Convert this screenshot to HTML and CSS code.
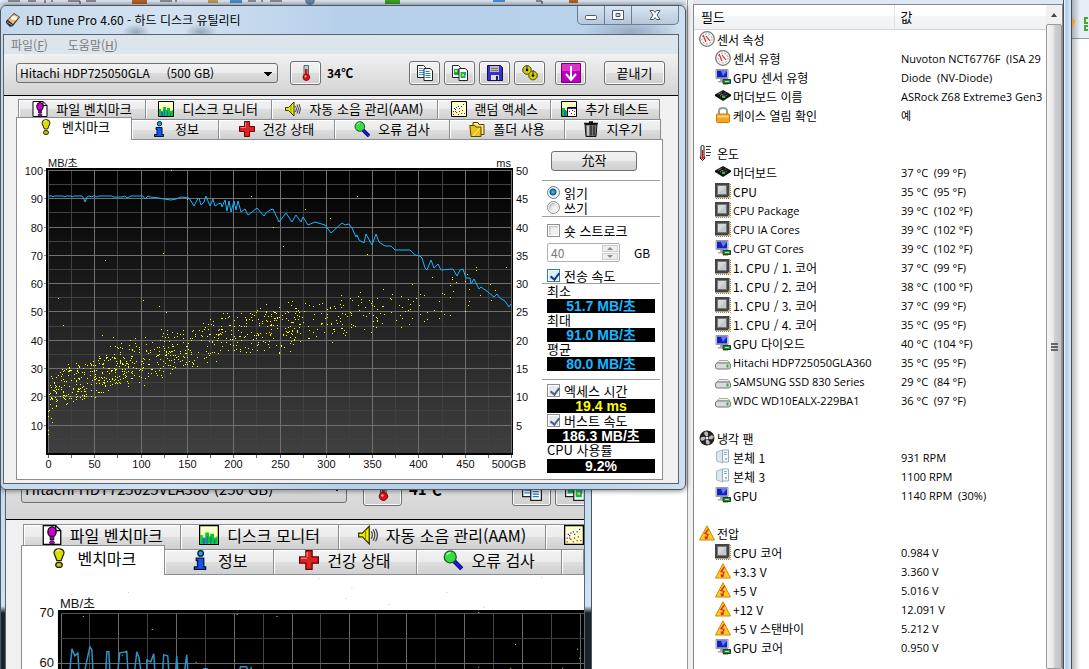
FILE: index.html
```html
<!DOCTYPE html>
<html lang="ko">
<head>
<meta charset="utf-8">
<title>HD Tune Pro 4.60 - 하드 디스크 유틸리티</title>
<link rel="stylesheet" href="styles.css">
</head>
<body>
<svg class="sprite" aria-hidden="true">
  <symbol id="i-disk" viewBox="0 0 16 16"><path d="M1 9 9 1l6 4-7 9-3 1-4-4z" fill="#333"/><path d="M3 8 9 2l5 3-6 7z" fill="#e9b878"/><ellipse cx="9" cy="6" rx="3" ry="2" fill="#fff3dc"/><path d="m2 10 5 3" stroke="#999"/></symbol>
  <symbol id="i-filebench" viewBox="0 0 16 16"><path d="M1 .5h10l4 4v11H1z" fill="#fff" stroke="#000"/><path d="M11 .5v4h4" fill="none" stroke="#000"/><ellipse cx="8" cy="5.500" rx="3.300" ry="4" fill="#c0c" stroke="#000"/><path d="M6.500 9h3v3h-3z" fill="#909" stroke="#000" stroke-width=".6"/><ellipse cx="8" cy="14" rx="2" ry="1.300" fill="#c0c" stroke="#000" stroke-width=".6"/></symbol>
  <symbol id="i-monitor" viewBox="0 0 16 16"><path d="M.5.5h15v15H.5z" fill="#ffffc8" stroke="#000"/><path d="M1 15V8h2v2h2V6h3v3h1V7h3v3h2v-1h1v6z" fill="#0c2"/><path d="M3 15v-4h2v4zM6 15V9h1v6zM9 15v-5h1v5zM12 15v-3h1v3z" fill="#35e"/></symbol>
  <symbol id="i-sound" viewBox="0 0 16 16"><path d="M.5 6.500h3L9 1v14L3.500 9.500h-3z" fill="#ee0" stroke="#330"/><path d="M6 4v8" stroke="#880"/><path d="M10.500 5q2 3 0 6M12 3.500q3 4.500 0 9M14 3q3 5 0 10" fill="none" stroke="#444"/></symbol>
  <symbol id="i-random" viewBox="0 0 16 16"><path d="M.5.5h15v15H.5z" fill="#ffffc8" stroke="#000"/><path d="M2 10h1v1H2zM4 8h1v1H4zM5 6h1v1H5zM7 5h1v1H7zM10 5h1v1h-1zM12 3h1v1h-1zM3 7h1v1H3zM8 7h1v1H8z" fill="#22f"/><path d="M2 13h1v1H2zM5 11h1v1H5zM8 10h1v1H8zM7 13h1v1H7zM11 9h1v1h-1zM13 12h1v1h-1zM10 12h1v1h-1zM4 10h1v1H4z" fill="#e00"/></symbol>
  <symbol id="i-extra" viewBox="0 0 16 16"><path d="M.5.5h15v15H.5z" fill="#ffffc8" stroke="#000"/><path d="M1 7h3v3h2v5H1z" fill="#0c2"/><path d="M3 9h2v6H3z" fill="#35e"/><path d="M6.500 6.500h9v9h-9z" fill="#fff" stroke="#000"/><path d="M7 7h8v1H7z" fill="#22c"/><path d="M8 10h1v1H8zM11 9h1v1h-1zM13 10h1v1h-1zM10 12h1v1h-1zM13 13h1v1h-1z" fill="#e00"/></symbol>
  <symbol id="i-bulb" viewBox="0 0 16 16"><path d="M8 .6q4 0 4 3.500L9.700 10H6.300L4 4.100Q4 .6 8 .6z" fill="#dd0" stroke="#220"/><path d="M6 2.500q1-1 2.500-1" stroke="#ffa" fill="none"/><ellipse cx="8" cy="13.500" rx="2.600" ry="2" fill="#cc0" stroke="#220"/></symbol>
  <symbol id="i-info" viewBox="0 0 16 16"><circle cx="8.500" cy="2.700" r="2.200" fill="#1ae" stroke="#013"/><path d="M5 6.500h6v7h1.500v2h-9v-2H6V8.500H5z" fill="#15e" stroke="#013"/></symbol>
  <symbol id="i-cross" viewBox="0 0 16 16"><path d="M5.500.5h5v5h5v5h-5v5h-5v-5h-5v-5h5z" fill="#d22" stroke="#600"/><path d="M6.500 6.500h-5M6.500 1.500v4" stroke="#f88"/></symbol>
  <symbol id="i-lens" viewBox="0 0 16 16"><path d="m9 9 6 6" stroke="#006" stroke-width="3.500"/><path d="m9 9 6 6" stroke="#22e" stroke-width="1.500"/><circle cx="5.800" cy="5.500" r="4.800" fill="#3d4" stroke="#252"/><path d="M3 4q1-2 3-2" stroke="#cfc" fill="none"/></symbol>
  <symbol id="i-folder" viewBox="0 0 16 16"><path d="M4 1.500h5l1 2h5v10H4z" fill="#ffe680" stroke="#540"/><path d="M.8 4.500h5l1 1.500H12v9.500H2z" fill="#ecc21a" stroke="#540"/><path d="m4 15 7-8" stroke="#fff08a"/></symbol>
  <symbol id="i-trash" viewBox="0 0 16 16"><path d="M2 3.500h12l-1 12H3z" fill="#777" stroke="#111"/><path d="M1 2.500h14M6 1h4" stroke="#111" stroke-width="1.600"/><path d="M5 4.500v10" stroke="#eee" stroke-width="1.300"/><path d="M8 4.500v10M11 4.500v10" stroke="#222" stroke-width="1.300"/></symbol>
  <symbol id="i-thermo" viewBox="0 0 16 16"><path d="M6 .5h4.500v9l1.500 3-3.500 3-3.500-3L6 9.500z" fill="#9bd8e8" stroke="#444" stroke-width=".8"/><path d="M7 4h2.500v7H7z" fill="#e11"/><circle cx="8.300" cy="12.300" r="3.300" fill="#d11" stroke="#600" stroke-width=".6"/><circle cx="7.500" cy="11.500" r="1" fill="#fbb"/></symbol>
  <symbol id="i-copy" viewBox="0 0 16 16"><path d="M.5.5h6l2 2v10h-8z" fill="#fff" stroke="#222"/><path d="M2 3.500h4M2 5.500h5M2 7.500h5M2 9.500h5" stroke="#39e"/><path d="M7 3.500h6l2.500 2v10H7z" fill="#fff" stroke="#222"/><path d="M8.500 6.500h4M8.500 8.500h5M8.500 10.500h5M8.500 12.500h5" stroke="#27c"/></symbol>
  <symbol id="i-copyimg" viewBox="0 0 16 16"><path d="M.5.5h6l2 2v10h-8z" fill="#fff" stroke="#222"/><path d="M2 4h5v6H2z" fill="#1a5"/><path d="M7 3.500h6l2.500 2v10H7z" fill="#fff" stroke="#222"/><path d="M8.500 7h5v6h-5z" fill="#1b5"/><path d="M3 5h2v2H3zM10 9h2v2h-2z" fill="#ed2"/><path d="M12 7h2v3h-2z" fill="#28c"/></symbol>
  <symbol id="i-save" viewBox="0 0 16 16"><path d="M.5.5h13l2 2v13H.5z" fill="#33c" stroke="#114"/><path d="M3 1h9v6H3z" fill="#bbb"/><path d="M4 3.500h7M4 5.500h7" stroke="#777"/><path d="M4 10h8v5H4z" fill="#ddd"/><path d="M9 11h2v4H9z" fill="#224"/></symbol>
  <symbol id="i-gears" viewBox="0 0 16 16"><g fill="#cc1" stroke="#330"><circle cx="5" cy="5" r="4.300"/><circle cx="11" cy="10.500" r="4.300"/></g><g fill="none" stroke="#aa1" stroke-dasharray="1 1"><circle cx="5" cy="5" r="4.300"/><circle cx="11" cy="10.500" r="4.300"/></g><circle cx="5" cy="5" r="1.300"/><circle cx="11" cy="10.500" r="1.300"/><path d="M5 0v4M11 5v5" stroke="#555" stroke-width="1.300"/></symbol>
  <symbol id="i-down" viewBox="0 0 20 20"><path d="M.5.5h19v19H.5z" fill="#b0b" stroke="#707"/><path d="M1 1h18v7H1z" fill="#d3c"/><path d="M10 3v12M5 11l5 6 5-6" fill="none" stroke="#fff" stroke-width="2"/></symbol>
  <symbol id="i-gauge" viewBox="0 0 16 16"><circle cx="8" cy="8" r="7.300" fill="#fafafa" stroke="#777" stroke-width="1.300"/><circle cx="8" cy="8" r="5" fill="none" stroke="#888" stroke-dasharray="1.500 2"/><path d="m4 4 3 7M7 5l4 5" stroke="#d22" stroke-width="1.200"/></symbol>
  <symbol id="i-gpu" viewBox="0 0 16 16"><path d="M1 .5h12v9H1z" fill="#ddd" stroke="#999"/><path d="M2 1.500h10v7H2z" fill="#12b"/><path d="M6 2h6L8 7z" fill="#67f"/><path d="M5 10h4v2h2v1.500H3V12h2z" fill="#aaa"/><path d="M8 10.500h7.500v4H8z" fill="#285" stroke="#143"/><path d="M10 12h4v1h-4z" fill="#bda"/><path d="M8 15h5v1H8z" fill="#da3"/></symbol>
  <symbol id="i-board" viewBox="0 0 16 16"><path d="m8 2 8 4.500v1.500L8 13 0 8V6.500z" fill="#111"/><path d="m3 6.500 5-3M5 8l6-3M8 9.500l5-3M4 5l7 4" stroke="#999" stroke-dasharray="1 1"/><path d="M7 8h3v2H7z" fill="#1c3"/></symbol>
  <symbol id="i-lock" viewBox="0 0 16 16"><path d="M4 8V4q0-3 4-3t4 3v4" fill="none" stroke="#999" stroke-width="2"/><rect x="1.500" y="7" width="13" height="8.500" rx="1" fill="#f7a41c" stroke="#c97a10"/><path d="M2.500 8.500h11v2h-11z" fill="#ffd877"/></symbol>
  <symbol id="i-temp" viewBox="0 0 16 16"><path d="M2 1.500q0-1 1.500-1T5 1.500V11l1 2-2.500 2.500L1 13l1-2z" fill="#fff" stroke="#111"/><path d="M3 5h1.200v6l1 2-1.700 1.500L2 13l1-2z" fill="#d11"/><path d="M7 1.500h5M7 4.500h4M7 7.500h5M7 10.500h4" stroke="#333"/></symbol>
  <symbol id="i-chip" viewBox="0 0 16 16"><path d="M1 15.500h14.500V1" fill="none" stroke="#a87c20" stroke-dasharray="1 1"/><path d="M0 0h14.500v14.500H0z" fill="#444"/><path d="M2.500 2.500h9v9h-9z" fill="#c4c8c8" stroke="#777"/><path d="M3 3h8L3 11z" fill="#dde0e0" opacity=".7"/><path d="M13 13h1.500v1.500H13z" fill="#e9a820"/></symbol>
  <symbol id="i-drive" viewBox="0 0 16 16"><path d="m2 9 2-2.500h9L15 9z" fill="#f2f2f2" stroke="#aaa"/><rect x=".5" y="9" width="15" height="6" rx="2" fill="#d8dadf" stroke="#777"/><path d="M11.500 10.500h2v3h-2z" fill="#3a3"/></symbol>
  <symbol id="i-fan" viewBox="0 0 16 16"><circle cx="8" cy="8" r="7.500" fill="#222"/><g fill="#bbb"><path d="M7 6Q4 4 6 1.500q4-.5 3 4.500z"/><path d="M10 7q2-3 4.500-1 .5 4-4.500 3z"/><path d="M9 10q3 2 1 4.500-4 .5-3-4.500z"/><path d="M6 9q-2 3-4.500 1Q1 6 6 7z"/></g><circle cx="8" cy="8" r="1.500" fill="#eee"/></symbol>
  <symbol id="i-case" viewBox="0 0 16 16"><path d="m1.500 3 6-2v13l-6-2z" fill="#dbe8ee" stroke="#aab8c0"/><path d="M7.500 1h6v12h-6z" fill="#f6fafc" stroke="#9ab"/><path d="M9 3.500h3M9 5.500h3" stroke="#8ac"/><path d="M10 10h2" stroke="#678"/></symbol>
  <symbol id="i-volt" viewBox="0 0 16 16"><path d="M8 .8 15.500 15H.5z" fill="#fc2" stroke="#c80" stroke-linejoin="round"/><path d="M9.500 4 6 8.500l3 1-2 4M6 11.500l.8 2.200 2-1" fill="none" stroke="#d22" stroke-width="1.300"/></symbol>
</svg>

<main class="desktop">
  <div class="left">
    <svg class="behind" viewBox="0 0 686 5" preserveAspectRatio="xMinYMin slice" aria-hidden="true">
      <path d="M8 1h12M28 1h8M45 0v3M52 0v2M68 1h12v3M86 1h10M160 1h12M176 0v2M248 1h8M262 0v2M270 1h12M536 1h6v3" stroke="#333" fill="none"/>
      <path d="M132 0h15v4h-15zM569 0h9v3h-9z" fill="#b5652a"/><path d="M385 0h15v4h-15z" fill="#3aa52a"/><path d="M208 0h10v3h-10z" fill="#c49a5a"/><path d="M230 0h12v3h-12zM493 0h12v2h-12z" fill="#4a8fd0"/><circle cx="310" cy="0" r="5" fill="#6d87a8"/>
    </svg>

    <section class="window window-back" aria-label="HD Tune Pro">
      <div class="client">
        <div class="toolbar">
          <select class="drive" aria-label="드라이브"><option>Hitachi HDT725025VLA380 (250 GB)</option></select>
          <button class="tool" aria-label="온도"><svg class="icon"><use href="#i-thermo"/></svg></button>
          <b class="degrees">41℃</b>
          <span class="spacer"></span>
          <button class="tool" aria-label="복사"><svg class="icon"><use href="#i-copy"/></svg></button>
          <button class="tool" aria-label="그림 복사"><svg class="icon"><use href="#i-copyimg"/></svg></button>
        </div>
        <div class="body">
          <nav class="tabs tabs-top">
            <button class="tab"><svg class="icon"><use href="#i-filebench"/></svg>파일 벤치마크</button>
            <button class="tab"><svg class="icon"><use href="#i-monitor"/></svg>디스크 모니터</button>
            <button class="tab"><svg class="icon"><use href="#i-sound"/></svg>자동 소음 관리(AAM)</button>
            <button class="tab cut" aria-label="랜덤 액세스"><svg class="icon"><use href="#i-random"/></svg></button>
          </nav>
          <nav class="tabs tabs-low">
            <button class="tab active"><svg class="icon"><use href="#i-bulb"/></svg>벤치마크</button>
            <button class="tab"><svg class="icon"><use href="#i-info"/></svg>정보</button>
            <button class="tab"><svg class="icon"><use href="#i-cross"/></svg>건강 상태</button>
            <button class="tab"><svg class="icon"><use href="#i-lens"/></svg>오류 검사</button>
            <button class="tab" aria-label="폴더 사용"></button>
          </nav>
          <div class="page"><svg class="chart" id="chart-back" viewBox="22 574 563 95" preserveAspectRatio="xMinYMin slice"></svg></div>
        </div>
      </div>
    </section>

    <section class="window window-front" aria-label="HD Tune Pro 4.60">
      <header class="titlebar">
        <svg class="icon"><use href="#i-disk"/></svg>
        <span class="title">HD Tune Pro 4.60 - 하드 디스크 유틸리티</span>
        <div class="controls">
          <button aria-label="최소화"><svg viewBox="0 0 14 12"><rect x="1.500" y="6.500" width="11" height="4" rx="1"/></svg></button>
          <button aria-label="최대화"><svg viewBox="0 0 14 12"><path d="M1.500 1.500h11v9h-11zM5 4.500h4v3H5z" fill-rule="evenodd"/></svg></button>
          <button class="close" aria-label="닫기"><svg viewBox="0 0 14 12"><path d="M2 1.500h3.500L7 3.500l1.500-2H12L9 6l3 4.500H8.500L7 8.500l-1.500 2H2L5 6z"/></svg></button>
        </div>
      </header>
      <div class="client">
        <nav class="menu"><button>파일(<u>F</u>)</button><button>도움말(<u>H</u>)</button></nav>
        <div class="toolbar">
          <select class="drive" aria-label="드라이브"><option>Hitachi HDP725050GLA &nbsp; &nbsp; (500 GB)</option></select>
          <button class="tool" aria-label="온도"><svg class="icon"><use href="#i-thermo"/></svg></button>
          <b class="degrees">34℃</b>
          <span class="spacer"></span>
          <button class="tool" aria-label="복사"><svg class="icon"><use href="#i-copy"/></svg></button>
          <button class="tool" aria-label="그림 복사"><svg class="icon"><use href="#i-copyimg"/></svg></button>
          <button class="tool" aria-label="저장"><svg class="icon"><use href="#i-save"/></svg></button>
          <button class="tool" aria-label="설정"><svg class="icon"><use href="#i-gears"/></svg></button>
          <button class="tool download" aria-label="내려받기"><svg class="icon"><use href="#i-down"/></svg></button>
          <button class="tool exit">끝내기</button>
        </div>
        <div class="body">
          <nav class="tabs tabs-top">
            <button class="tab"><svg class="icon"><use href="#i-filebench"/></svg>파일 벤치마크</button>
            <button class="tab"><svg class="icon"><use href="#i-monitor"/></svg>디스크 모니터</button>
            <button class="tab"><svg class="icon"><use href="#i-sound"/></svg>자동 소음 관리(AAM)</button>
            <button class="tab"><svg class="icon"><use href="#i-random"/></svg>랜덤 액세스</button>
            <button class="tab"><svg class="icon"><use href="#i-extra"/></svg>추가 테스트</button>
          </nav>
          <nav class="tabs tabs-low">
            <button class="tab active"><svg class="icon"><use href="#i-bulb"/></svg>벤치마크</button>
            <button class="tab"><svg class="icon"><use href="#i-info"/></svg>정보</button>
            <button class="tab"><svg class="icon"><use href="#i-cross"/></svg>건강 상태</button>
            <button class="tab"><svg class="icon"><use href="#i-lens"/></svg>오류 검사</button>
            <button class="tab"><svg class="icon"><use href="#i-folder"/></svg>폴더 사용</button>
            <button class="tab"><svg class="icon"><use href="#i-trash"/></svg>지우기</button>
          </nav>
          <div class="page">
            <svg class="chart" id="chart-front" viewBox="17 140 525 339"></svg>
            <form class="panel">
              <button type="button" class="start">允작</button>
              <hr>
              <div class="radios">
                <label class="line"><input type="radio" name="mode" checked>읽기</label>
                <label class="line"><input type="radio" name="mode">쓰기</label>
              </div>
              <hr>
              <label class="line short"><input type="checkbox">숏 스트로크</label>
              <div class="amount">
                <span class="spin"><input type="text" value="40" aria-label="용량" disabled><span class="arrows"><i></i><i></i></span></span>
                <span>GB</span>
              </div>
              <label class="line"><input type="checkbox" checked>전송 속도</label>
              <hr>
              <div class="results">
                <span>최소</span><output>51.7 MB/초</output>
                <span>최대</span><output>91.0 MB/초</output>
                <span>평균</span><output>80.0 MB/초</output>
              </div>
              <hr>
              <div class="results more">
                <label class="line"><input type="checkbox" class="dim" checked>엑세스 시간</label><output class="yellow">19.4 ms</output>
                <label class="line"><input type="checkbox" class="dim" checked>버스트 속도</label><output class="white">186.3 MB/초</output>
                <span>CPU 사용률</span><output class="white">9.2%</output>
              </div>
            </form>
          </div>
        </div>
      </div>
    </section>
  </div>

  <section class="sensors">
    <div class="list">
      <table>
        <colgroup><col class="c-field"><col></colgroup>
        <thead><tr><th>필드</th><th>값</th></tr></thead>
        <tbody>
          <tr class="group"><td><svg class="icon"><use href="#i-gauge"/></svg>센서 속성</td><td></td></tr>
          <tr><td><svg class="icon"><use href="#i-gauge"/></svg>센서 유형</td><td>Nuvoton NCT6776F&nbsp; (ISA 29</td></tr>
          <tr><td><svg class="icon"><use href="#i-gpu"/></svg>GPU 센서 유형</td><td>Diode&nbsp; (NV-Diode)</td></tr>
          <tr><td><svg class="icon"><use href="#i-board"/></svg>머더보드 이름</td><td>ASRock Z68 Extreme3 Gen3</td></tr>
          <tr><td><svg class="icon"><use href="#i-lock"/></svg>케이스 열림 확인</td><td>예</td></tr>
        </tbody>
        <tbody>
          <tr class="group"><td><svg class="icon"><use href="#i-temp"/></svg>온도</td><td></td></tr>
          <tr><td><svg class="icon"><use href="#i-board"/></svg>머더보드</td><td>37 °C&nbsp; (99 °F)</td></tr>
          <tr><td><svg class="icon"><use href="#i-chip"/></svg>CPU</td><td>35 °C&nbsp; (95 °F)</td></tr>
          <tr><td class="latin"><svg class="icon"><use href="#i-chip"/></svg>CPU Package</td><td>39 °C&nbsp; (102 °F)</td></tr>
          <tr><td class="latin"><svg class="icon"><use href="#i-chip"/></svg>CPU IA Cores</td><td>39 °C&nbsp; (102 °F)</td></tr>
          <tr><td class="latin"><svg class="icon"><use href="#i-gpu"/></svg>CPU GT Cores</td><td>39 °C&nbsp; (102 °F)</td></tr>
          <tr><td><svg class="icon"><use href="#i-chip"/></svg>1. CPU / 1. 코어</td><td>37 °C&nbsp; (99 °F)</td></tr>
          <tr><td><svg class="icon"><use href="#i-chip"/></svg>1. CPU / 2. 코어</td><td>38 °C&nbsp; (100 °F)</td></tr>
          <tr><td><svg class="icon"><use href="#i-chip"/></svg>1. CPU / 3. 코어</td><td>37 °C&nbsp; (99 °F)</td></tr>
          <tr><td><svg class="icon"><use href="#i-chip"/></svg>1. CPU / 4. 코어</td><td>35 °C&nbsp; (95 °F)</td></tr>
          <tr><td><svg class="icon"><use href="#i-gpu"/></svg>GPU 다이오드</td><td>40 °C&nbsp; (104 °F)</td></tr>
          <tr><td class="latin"><svg class="icon"><use href="#i-drive"/></svg>Hitachi HDP725050GLA360</td><td>35 °C&nbsp; (95 °F)</td></tr>
          <tr><td class="latin"><svg class="icon"><use href="#i-drive"/></svg>SAMSUNG SSD 830 Series</td><td>29 °C&nbsp; (84 °F)</td></tr>
          <tr><td class="latin"><svg class="icon"><use href="#i-drive"/></svg>WDC WD10EALX-229BA1</td><td>36 °C&nbsp; (97 °F)</td></tr>
        </tbody>
        <tbody>
          <tr class="group"><td><svg class="icon"><use href="#i-fan"/></svg>냉각 팬</td><td></td></tr>
          <tr><td><svg class="icon"><use href="#i-case"/></svg>본체 1</td><td>931 RPM</td></tr>
          <tr><td><svg class="icon"><use href="#i-case"/></svg>본체 3</td><td>1100 RPM</td></tr>
          <tr><td><svg class="icon"><use href="#i-gpu"/></svg>GPU</td><td>1140 RPM&nbsp; (30%)</td></tr>
        </tbody>
        <tbody>
          <tr class="group"><td><svg class="icon"><use href="#i-volt"/></svg>전압</td><td></td></tr>
          <tr><td><svg class="icon"><use href="#i-chip"/></svg>CPU 코어</td><td>0.984 V</td></tr>
          <tr><td><svg class="icon"><use href="#i-volt"/></svg>+3.3 V</td><td>3.360 V</td></tr>
          <tr><td><svg class="icon"><use href="#i-volt"/></svg>+5 V</td><td>5.016 V</td></tr>
          <tr><td><svg class="icon"><use href="#i-volt"/></svg>+12 V</td><td>12.091 V</td></tr>
          <tr><td><svg class="icon"><use href="#i-volt"/></svg>+5 V 스탠바이</td><td>5.212 V</td></tr>
          <tr><td><svg class="icon"><use href="#i-gpu"/></svg>GPU 코어</td><td>0.950 V</td></tr>
        </tbody>
      </table>
      <div class="scroll"><i class="up"></i><div class="thumb"><i></i><i></i><i></i></div></div>
    </div>
    <div class="frame"></div>
    <div class="edge"><svg viewBox="0 0 17 40"><path d="m0 17 3 4-3 9z" fill="#e9a030"/><path d="M16 18h-3v5h3M16 26h-3v4h3" fill="none" stroke="#4a3" stroke-width="2"/></svg></div>
  </section>
</main>
<script src="script.js"></script>
</body>
</html>
```
FILE: styles.css
```css
* { box-sizing: border-box; }
body {
  margin: 0;
  font: 13px/16px "Noto Sans CJK KR", sans-serif;
  color: #000;
  overflow: hidden;
}
button, input, select { font: inherit; color: inherit; margin: 0; padding: 0; }
button { border: 0; background: none; }
.sprite { position: absolute; width: 0; height: 0; }
.icon { width: 16px; height: 16px; flex: none; }

.desktop {
  display: grid;
  grid-template-columns: minmax(0, 1fr) 403px;
  height: 100vh;
  background: #fff;
}
.left { position: relative; min-width: 0; }
.behind { display: block; width: 100%; height: 5px; background: #dbe7f3; }

/* windows */
.window {
  border: 1px solid #4b5966;
  background: linear-gradient(180deg, #b4cce8, #c2d8ee 30%, #c9dcef);
}
.window-front {
  position: relative;
  padding: 0 6px 5px 2px;
  border-radius: 6px;
  box-shadow: 0 0 5px 1px #0007;
  background:
    radial-gradient(ellipse 14px 8px at 135px 26px, #62758c88, transparent),
    radial-gradient(ellipse 16px 8px at 200px 26px, #62758c88, transparent),
    radial-gradient(ellipse 50px 16px at 630px 26px, #8193aaaa, transparent),
    linear-gradient(90deg, #c6d9ec, #d3e2f0 25%, #b6cfea 50%, #b9d2ec 85%, #cfe0f0);
}
.window-back {
  position: absolute;
  inset: 440px 94px 0 0;
  padding: 0 6px 0 4px;
  border-bottom: 0;
  overflow: hidden;
  background: linear-gradient(180deg, #c2d8ee, #cfe2f3 165px, #1c222a 172px);
}
.client {
  border: 1px solid #59636b;
  background: #f0f0f0;
}
.window-back .client { border-width: 0 1px; overflow: hidden; }

.titlebar { display: flex; align-items: center; gap: 5px; height: 28px; padding-left: 2px; font-size: 12px; }
.title { flex: 1; white-space: nowrap; }
.controls {
  display: flex;
  align-self: flex-start;
  height: 19px;
  border: 1px solid #6d7e90;
  border-top: 0;
  border-radius: 0 0 5px 5px;
  background: linear-gradient(#dce7f2cc, #b5c6d8cc);
}
.controls button { width: 27px; border-right: 1px solid #6d7e90; display: grid; place-items: center; }
.controls .close { width: 46px; border-right: 0; }
.controls svg { width: 14px; height: 12px; fill: #fff; stroke: #4c5866; }

.menu { display: flex; gap: 20px; height: 19px; padding-left: 7px; background: #dce4ec; color: #7b7b7b; font-size: 12px; }
.menu button { color: inherit; }

.toolbar {
  display: flex;
  align-items: center;
  height: 42px;
  padding: 0 13px 4px 12px;
  border-bottom: 1px solid #000;
  background: linear-gradient(#f1f1f1, #d3d3d3);
}
.drive {
  appearance: none;
  width: 262px;
  height: 20px;
  padding: 0 3px;
  border: 1px solid #707070;
  border-radius: 3px;
  line-height: 16px;
  font-size: 12px;
  background:
    linear-gradient(45deg, transparent 50%, #000 50%) right 9px top 8px / 4px 4px no-repeat,
    linear-gradient(-45deg, transparent 50%, #000 50%) right 5px top 8px / 4px 4px no-repeat,
    linear-gradient(#f2f2f2, #ebebeb 50%, #ddd 50%, #cfcfcf);
  background:
    conic-gradient(from -45deg at 50% 100%, #000 90deg, transparent 0) right 4px top 8px / 0 0 no-repeat,
    linear-gradient(to bottom left, #000 50%, transparent 52%) right 9px top 8px / 4px 4px no-repeat,
    linear-gradient(to bottom right, #000 50%, transparent 52%) right 5px top 8px / 4px 4px no-repeat,
    linear-gradient(#f2f2f2, #ebebeb 50%, #ddd 50%, #cfcfcf);
}
.tool {
  display: grid;
  place-items: center;
  flex: none;
  width: 31px;
  height: 24px;
  margin-left: 4px;
  border: 1px solid #707070;
  border-radius: 3px;
  box-shadow: inset 0 0 0 1px #fafafa;
  background: linear-gradient(#f2f2f2, #ebebeb 50%, #ddd 50%, #cfcfcf);
}
.drive + .tool { margin-left: 12px; }
.degrees { margin-left: 6px; font-size: 12px; }
.spacer { flex: 1; }
.download { margin-left: 10px; }
.download .icon { width: 20px; height: 20px; }
.exit { width: 61px; margin-left: 18px; font-size: 13px; }

.body { padding: 3px 15px 3px 12px; }
.tabs { display: grid; }
.tab {
  display: flex;
  align-items: center;
  justify-content: center;
  gap: 8px;
  height: 20px;
  padding-bottom: 2px;
  border: 1px solid #8a8c96;
  border-width: 1px 1px 0 0;
  box-shadow: inset 1px 1px #fff;
  white-space: nowrap;
  background: linear-gradient(#f2f2f2, #ebebeb 50%, #dedede 50%, #d0d0d0);
}
.tabs-top { grid-template-columns: 127fr 126fr 167fr 113fr 109fr; margin: 0 3px 0 2px; border-left: 1px solid #8a8c96; }
.tabs-low { grid-template-columns: 116fr 87fr 116fr 115fr 115fr 96fr; margin-right: 2px; }
.tab.active {
  position: relative;
  height: 23px;
  margin: -2px 0 -1px;
  padding-bottom: 4px;
  border-left-width: 1px;
  box-shadow: none;
  background: #fff;
}
.page { display: flex; border: 1px solid #8a8c96; background: #fff; }
.chart { flex: 1; min-width: 0; display: block; }
.chart text { font: 11px "Liberation Sans", "Noto Sans CJK KR", sans-serif; fill: #111; }
#chart-back text { font-size: 13px; }

/* options column */
.panel { width: 120px; padding: 11px 0 0; }
.panel hr { width: 118px; height: 1px; margin: 0; border: 0; background: #a0a0a0; }
.panel > .line, .panel > .amount, .radios, .results { margin-left: 5px; }
.start {
  display: block;
  width: 86px;
  height: 20px;
  margin: 0 0 9px 9px;
  padding-bottom: 2px;
  border: 1px solid #707070;
  border-radius: 3px;
  background: linear-gradient(#f2f2f2, #ebebeb 50%, #ddd 50%, #cfcfcf);
}
.radios { padding: 4px 0 1px; }
.line { display: flex; align-items: center; gap: 4px; height: 15px; line-height: 13px; padding-bottom: 1px; }
.panel > .short { margin-top: 6px; }
.line input { appearance: none; width: 13px; height: 13px; border: 1px solid #8e8f8f; background: #f0f0f0; box-shadow: inset 0 0 0 1px #fff, inset 2px 2px 2px #bbb; }
.line input[type="radio"] { border-radius: 50%; }
.line input[type="radio"]:checked { background: radial-gradient(circle at 5px 5px, #5fc8f0, #12527f 3px, #eef4f8 4px); border-color: #5a7f97; box-shadow: none; }
.line input[type="checkbox"]:checked { border-color: #2c7fb5; background: #d8eefb; position: relative; box-shadow: inset 0 0 0 1px #fff; }
.line input[type="checkbox"]:checked::after { content: ""; position: absolute; left: 4px; top: 1px; width: 4px; height: 7px; border: solid #123c7c; border-width: 0 2px 2px 0; transform: rotate(38deg); }
.line input[type="checkbox"].dim:checked { border-color: #8e8f8f; background: #e6e8ea; }
.line input[type="checkbox"].dim:checked::after { border-color: #4a5f97; }
.amount { display: flex; align-items: center; gap: 14px; margin: 5px 0 6px; font-size: 12px; }
.spin { display: flex; width: 73px; height: 19px; border: 1px solid #b0b0b0; border-radius: 2px; padding: 1px; }
.spin input { flex: 1; min-width: 0; border: 0; padding-left: 2px; background: #fff; color: #777; }
.arrows { display: grid; width: 16px; gap: 1px; }
.arrows i { display: grid; place-items: center; border: 1px solid #ccc; background: #eee; }
.arrows i::after { content: ""; border: 3px solid transparent; border-top: 0; border-bottom: 3px solid #888; }
.arrows i + i::after { border: 3px solid transparent; border-bottom: 0; border-top: 3px solid #888; }
.results { display: grid; width: 108px; grid-auto-rows: 15px 14px; margin-bottom: 8px; line-height: 13px; }
.results.more { grid-auto-rows: 16px 14px; margin: 3px 0 0 5px; }
.results output {
  background: #000;
  color: #1ab5ff;
  text-align: center;
  font: bold 14px/14px "Liberation Sans", "Noto Sans CJK KR", sans-serif;
  overflow: hidden;
}
.results .yellow { color: #ff0; }
.results .white { color: #fff; }

/* rear window, shown at a larger scale */
.window-back .toolbar { height: 79px; padding: 0 0 16px 15px; margin-right: -10px; align-items: flex-end; }
.window-back .drive { width: 326px; height: 25px; padding-bottom: 4px; font-size: 15px; }
.window-back .tool { width: 39px; height: 30px; margin-bottom: -3px; }
.window-back .tool .icon { width: 20px; height: 20px; }
.window-back .drive + .tool { margin-left: 16px; }
.window-back .degrees { margin-left: 7px; font-size: 15px; line-height: 28px; }
.window-back .body { padding: 4px 0 0 15px; font-size: 16px; }
.window-back .tab { height: 25px; gap: 8px; padding-bottom: 4px; }
.window-back .tab .icon { width: 20px; height: 20px; }
.window-back .tabs-top { grid-template-columns: 158fr 158fr 208fr 38fr; margin-right: 0; }
.window-back .tabs-low { grid-template-columns: 144fr 109fr 144fr 145fr 22fr; margin-right: 0; }
.window-back .tab.active { height: 30px; margin: -4px 0 -1px; padding-bottom: 6px; }
.window-back .tab.cut { justify-content: flex-end; border-right: 0; }
.window-back .page { border-right: 0; border-bottom: 0; }

/* sensor list */
.sensors { display: flex; min-width: 0; padding-left: 7px; background: linear-gradient(90deg, #fff 1px, #999 1px 2px, #f0f0f0 2px 7px, #dfe7f0 7px); font-size: 12px; }
.list { flex: 1; display: flex; min-width: 0; margin-top: 4px; border: 1px solid #828790; border-bottom: 0; background: #fff; overflow: hidden; }
table { flex: 1; width: 100%; min-width: 0; table-layout: fixed; border-collapse: collapse; align-self: flex-start; }
.c-field { width: 200px; }
th { height: 24px; padding: 0 7px; text-align: left; font-weight: 400; font-size: 13px; background: linear-gradient(#fff 45%, #f4f5f7 45%, #f1f2f4); border-bottom: 1px solid #d5d5d5; }
th + th { border-left: 1px solid #dfe2e6; padding-left: 6px; }
td { height: 19px; padding: 0 0 0 7px; line-height: 19px; white-space: nowrap; overflow: hidden; }
td:first-child { padding-left: 21px; overflow: visible; }
.latin, td + td { font-family: "Open Sans", "Noto Sans CJK KR", sans-serif; font-size: 11px; }
.group td:first-child { padding-left: 5px; }
td .icon { vertical-align: top; margin: 1px 2px 0 0; }
tbody + tbody::before { content: ""; display: table-row; height: 19px; }
.scroll { flex: none; width: 16px; display: flex; flex-direction: column; background: #f0f0f0; }
.up { height: 19px; display: grid; place-items: center; }
.up::after { content: ""; border: 3px solid transparent; border-top: 0; border-bottom: 4px solid #444; }
.thumb { flex: 1; display: flex; flex-direction: column; justify-content: center; align-items: center; gap: 1px; border: 1px solid #999; border-radius: 2px; background: linear-gradient(90deg, #f5f5f5, #e8e8e8 45%, #d0d0d3 55%, #c4c4c8); }
.thumb i { width: 7px; height: 2px; background: #666; }
.frame { width: 9px; border: solid #46515c; border-width: 0 1px; background: linear-gradient(90deg, #e5f0fa 1px, #a9c3dd 2px, #cfe2f6 5px); }
.edge { width: 17px; background: linear-gradient(90deg, #0004, transparent 8px), linear-gradient(#e6eef8 38px, #999 38px 39px, #fff 39px); }
.edge svg { width: 17px; height: 40px; display: block; }
```
FILE: script.js
```js
const line = (x1, y1, x2, y2, color) =>
  `<path d="M${x1} ${y1}L${x2} ${y2}" stroke="${color}" shape-rendering="crispEdges"/>`;
const label = (x, y, text, anchor) => `<text x="${x}" y="${y}" text-anchor="${anchor}">${text}</text>`;
const dot = (x, y, color) => `<path d="M${Math.round(x)} ${Math.round(y)}h1v1h-1z" fill="${color}"/>`;

function seeded(seed) {
  return () => {
    seed = (seed * 1664525 + 1013904223) % 4294967296;
    return seed / 4294967296;
  };
}

function drawFront() {
  let out = '<defs><linearGradient id="dark" x2="0" y2="1"><stop stop-color="#000"/><stop offset="1" stop-color="#404040"/></linearGradient></defs>';
  out += '<path d="M46 168h467v287H46z"/><path d="M48 170h464v283H48z" fill="url(#dark)"/>';
  const left = 48.5, top = 170.5, dx = 23.15, dy = 14.14;
  for (const major of [0, 1]) {
    const color = major ? '#707070' : '#404040';
    for (let i = 0; i <= 20; i++) {
      if ((i % 2 === 0) !== !!major) continue;
      const x = Math.floor(left + i * dx) + 0.5, y = Math.floor(top + i * dy) + 0.5;
      out += line(x, 170, x, 453, color) + line(x, 455, x, 458, '#666');
      if (i < 20) out += line(48, y, 512, y, color);
      if (major && i < 20) {
        out += line(44, y, 46, y, '#888');
        out += label(43, y + 4, 100 - i * 5, 'end') + label(516, y + 4, 50 - i * 2.5, 'start');
      }
      if (major && i < 20) out += label(x, 468, i * 25, 'middle');
    }
  }
  out += label(526, 468, '500GB', 'end') + label(48, 167, 'MB/초', 'start') + label(511, 167, 'ms', 'end');

  const curve = '48,196 52,196 53,197 54,196 63,196 65,197 66,196 71,196 72,197 74,196 82,196 84,199 85,202 87,197 89,196 92,197 93,196 95,196 97,197 99,196 112,196 113,197 122,197 125,196 127,198 129,197 131,196 143,196 145,199 148,196 150,197 159,198 164,199 171,200 176,199 181,197 189,198 191,201 194,206 197,200 199,198 201,205 204,202 206,196 210,206 213,199 215,206 218,204 221,203 222,207 225,200 227,211 229,201 231,212 234,201 236,210 238,201 241,212 245,209 248,215 252,212 257,208 264,216 266,213 270,210 273,209 279,222 286,213 292,222 296,215 301,222 303,217 308,225 315,222 325,225 331,233 342,223 345,225 349,224 352,228 356,237 357,235 359,240 364,243 366,234 372,245 376,234 379,242 385,246 391,246 395,250 410,250 415,255 420,256 422,258 425,268 427,270 431,260 434,268 438,264 441,270 453,269 457,276 460,270 463,269 466,278 470,278 471,284 474,279 479,289 481,287 488,292 494,297 497,294 500,298 505,301 509,307 511,304';
  out += `<polyline points="${curve}" fill="none" stroke="#1ab5ff" stroke-width="1"/>`;

  const strays = [[171,170],[251,196],[187,199],[273,227],[163,253],[105,260],[58,298],[143,300],[159,306],[166,312],[305,209],[357,196],[330,218],[283,246],[367,254],[432,277],[476,267],[476,270],[506,267],[452,277],[452,279],[467,274],[465,281],[456,282],[450,285],[469,289],[412,284],[490,284],[495,290],[468,305],[491,300],[480,295],[465,311],[469,301],[450,315],[439,318],[63,325],[102,335],[113,337],[48,430],[48,434],[52,422],[48,416],[51,418]];
  strays.forEach(([x, y]) => { out += dot(x, y, '#ff0'); });

  // x from, x to, count, upper and lower bound at each end
  const bands = [
    [48, 56, 26, 380, 418, 366, 412], [54, 85, 105, 366, 412, 352, 402],
    [85, 130, 160, 354, 402, 336, 388], [130, 180, 140, 336, 390, 322, 376],
    [180, 235, 115, 324, 372, 304, 362], [235, 300, 165, 306, 360, 296, 352],
    [300, 360, 70, 298, 350, 288, 338], [360, 425, 55, 286, 336, 288, 324],
    [425, 455, 10, 290, 322, 290, 316]
  ];
  const rand = seeded(46);
  for (const [x1, x2, count, a1, b1, a2, b2] of bands) {
    for (let i = 0; i < count; i++) {
      const t = rand(), high = a1 + (a2 - a1) * t, low = b1 + (b2 - b1) * t;
      out += dot(x1 + (x2 - x1) * t, high + (low - high) * (0.75 * rand() + 0.25 * rand()), '#ff0');
    }
  }
  document.getElementById('chart-front').innerHTML = out;
}

function drawBack() {
  let out = '<path d="M58 609h560v160H58z"/>';
  for (let i = 0; i < 20; i++) {
    const x = Math.floor(61 + i * 28.9) + 0.5;
    out += line(x, 612, x, 669, i % 2 ? '#444' : '#6c6c6c');
  }
  out += line(61, 612.5, 600, 612.5, '#555') + line(61, 637.5, 600, 637.5, '#3c3c3c') + line(58, 662.5, 600, 662.5, '#6c6c6c');
  out += label(54, 616, 70, 'end') + label(54, 666, 60, 'end') + label(60, 607, 'MB/초', 'start');
  out += '<path d="M70 669 72 648 75 655 78 652 79 669M85 669 90 646 92 649 93 669M106 669 107 651H109L110 669M118 669 120 652 127 651 128 669M135 669 137 651 139 656 141 669M147 669 147 659 151 661 154 653 155 669M163 669 164 654 168 655 169 669M176 669 177 655 178 669M185 669 187 654 188 669M203 669 204 668H208M240 669 241 666H247L248 669M251 669 252 666" fill="none" stroke="#2a93c8" stroke-width="1.500"/>';
  [[83,615],[152,628],[277,615],[237,613],[122,654],[196,661],[71,593],[128,591],[319,577],[346,597],[352,586],[389,603],[447,591],[484,606],[542,576],[479,611],[516,643],[578,648],[580,657],[479,666],[511,667],[563,667],[139,659],[126,650]]
    .forEach(([x, y]) => { out += dot(x, y, '#d6d65a'); });
  document.getElementById('chart-back').innerHTML = out;
}

drawFront();
drawBack();
```
